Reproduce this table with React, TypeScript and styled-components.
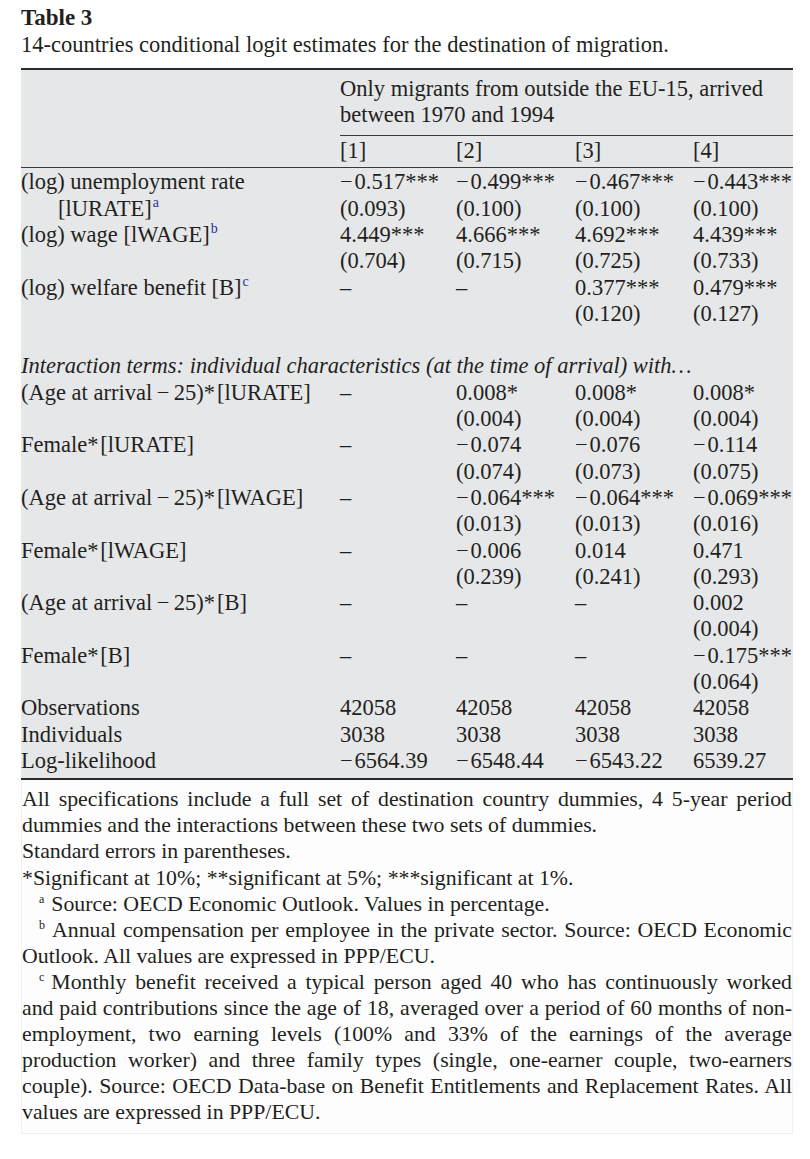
import React from "react";
import styled, { createGlobalStyle } from "styled-components";

const GlobalStyle = createGlobalStyle`
  body {
    margin: 0;
    background: #ffffff;
    color: #231f20;
    font-family: "Liberation Serif", "Times New Roman", serif;
  }
`;

const Page = styled.div`
  width: 772px;
  padding: 5px 0 0 21px;
  font-size: 22.5px;
`;

const Caption = styled.div`
  line-height: 26.5px;
  margin-bottom: 10px;
`;

const CaptionTitle = styled.div`
  font-weight: 700;
  font-size: 23px;
`;

const CaptionText = styled.div``;

const TableStyled = styled.table`
  width: 772px;
  table-layout: fixed;
  border-collapse: collapse;
  background: #e6e7e9;
  border-top: 2px solid #2b2b2b;
  border-bottom: 2px solid #2b2b2b;
  line-height: 26.3px;

  td,
  th {
    padding: 0;
    vertical-align: top;
    text-align: left;
    font-weight: 400;
    white-space: nowrap;
  }
`;

const HeadBlank = styled.th`
  border-bottom: 1.5px solid #3a3a3a;
`;

const GroupHead = styled.th`
  && {
    white-space: normal;
    padding: 6px 0 6px 0;
    border-bottom: 1.5px solid #3a3a3a;
  }
`;

const ColHead = styled.th`
  && {
    padding: 2px 0 3px;
    border-bottom: 1.5px solid #3a3a3a;
  }
`;

const SpacerRow = styled.tr<{ $h: number }>`
  height: ${(p) => p.$h}px;
`;

const LabelCell = styled.td``;

const ValueCell = styled.td``;

const SectionCell = styled.td`
  font-style: italic;
`;

const Indent = styled.span`
  padding-left: 37px;
`;

const Note = styled.sup`
  font-size: 14px;
  line-height: 0;
  color: #2d3192;
  margin-left: 1px;
`;

const Notes = styled.div`
  background: #fdfdfd;
  border: 1px solid #f0f0f0;
  border-top: none;
  padding: 6px 0 8px;
  font-size: 21.8px;
  line-height: 26.1px;
`;

const NoteParagraph = styled.p<{ $indent?: boolean }>`
  margin: 0;
  text-align: justify;
  text-indent: ${(p) => (p.$indent ? "17px" : "0")};
`;

const FootMark = styled.sup`
  font-size: 12px;
  line-height: 0;
  vertical-align: 8px;
  margin-right: 7px;
`;

type RowType = {
  label: React.ReactNode;
  values: [string, string][];
};

const mainRows: RowType[] = [
  {
    label: (
      <>
        (log) unemployment rate
        <br />
        <Indent>
          [lURATE]<Note>a</Note>
        </Indent>
      </>
    ),
    values: [
      ["−\u200A0.517***", "(0.093)"],
      ["−\u200A0.499***", "(0.100)"],
      ["−\u200A0.467***", "(0.100)"],
      ["−\u200A0.443***", "(0.100)"],
    ],
  },
  {
    label: (
      <>
        (log) wage [lWAGE]<Note>b</Note>
      </>
    ),
    values: [
      ["4.449***", "(0.704)"],
      ["4.666***", "(0.715)"],
      ["4.692***", "(0.725)"],
      ["4.439***", "(0.733)"],
    ],
  },
  {
    label: (
      <>
        (log) welfare benefit [B]<Note>c</Note>
      </>
    ),
    values: [
      ["–", ""],
      ["–", ""],
      ["0.377***", "(0.120)"],
      ["0.479***", "(0.127)"],
    ],
  },
];

const interactionRows: RowType[] = [
  {
    label: "(Age at arrival\u2009−\u200925)*\u200A[lURATE]",
    values: [
      ["–", ""],
      ["0.008*", "(0.004)"],
      ["0.008*", "(0.004)"],
      ["0.008*", "(0.004)"],
    ],
  },
  {
    label: "Female*\u200A[lURATE]",
    values: [
      ["–", ""],
      ["−\u200A0.074", "(0.074)"],
      ["−\u200A0.076", "(0.073)"],
      ["−\u200A0.114", "(0.075)"],
    ],
  },
  {
    label: "(Age at arrival\u2009−\u200925)*\u200A[lWAGE]",
    values: [
      ["–", ""],
      ["−\u200A0.064***", "(0.013)"],
      ["−\u200A0.064***", "(0.013)"],
      ["−\u200A0.069***", "(0.016)"],
    ],
  },
  {
    label: "Female*\u200A[lWAGE]",
    values: [
      ["–", ""],
      ["−\u200A0.006", "(0.239)"],
      ["0.014", "(0.241)"],
      ["0.471", "(0.293)"],
    ],
  },
  {
    label: "(Age at arrival\u2009−\u200925)*\u200A[B]",
    values: [
      ["–", ""],
      ["–", ""],
      ["–", ""],
      ["0.002", "(0.004)"],
    ],
  },
  {
    label: "Female*\u200A[B]",
    values: [
      ["–", ""],
      ["–", ""],
      ["–", ""],
      ["−\u200A0.175***", "(0.064)"],
    ],
  },
];

const summaryRows: [string, string[]][] = [
  ["Observations", ["42058", "42058", "42058", "42058"]],
  ["Individuals", ["3038", "3038", "3038", "3038"]],
  ["Log-likelihood", ["−\u200A6564.39", "−\u200A6548.44", "−\u200A6543.22", "6539.27"]],
];

function EstimateRow(props: RowType) {
  return (
    <tr>
      <LabelCell>{props.label}</LabelCell>
      {props.values.map(([coef, se], i) => (
        <ValueCell key={i}>
          {coef}
          {se && (
            <>
              <br />
              {se}
            </>
          )}
        </ValueCell>
      ))}
    </tr>
  );
}

export default function App() {
  return (
    <Page>
      <GlobalStyle />
      <Caption>
        <CaptionTitle>Table 3</CaptionTitle>
        <CaptionText>
          14-countries conditional logit estimates for the destination of migration.
        </CaptionText>
      </Caption>

      <TableStyled>
        <colgroup>
          <col style={{ width: 319 }} />
          <col style={{ width: 116 }} />
          <col style={{ width: 119 }} />
          <col style={{ width: 118 }} />
          <col style={{ width: 100 }} />
        </colgroup>
        <thead>
          <tr>
            <HeadBlank rowSpan={2} />
            <GroupHead colSpan={4}>
              Only migrants from outside the EU-15, arrived between 1970 and 1994
            </GroupHead>
          </tr>
          <tr>
            <ColHead>[1]</ColHead>
            <ColHead>[2]</ColHead>
            <ColHead>[3]</ColHead>
            <ColHead>[4]</ColHead>
          </tr>
        </thead>
        <tbody>
          <SpacerRow $h={2} />
          {mainRows.map((r, i) => (
            <EstimateRow key={i} {...r} />
          ))}
          <SpacerRow $h={26.3} />
          <tr>
            <SectionCell colSpan={5}>
              Interaction terms: individual characteristics (at the time of arrival) with…
            </SectionCell>
          </tr>
          {interactionRows.map((r, i) => (
            <EstimateRow key={i} {...r} />
          ))}
          {summaryRows.map(([label, vals]) => (
            <tr key={label}>
              <LabelCell>{label}</LabelCell>
              {vals.map((v, i) => (
                <ValueCell key={i}>{v}</ValueCell>
              ))}
            </tr>
          ))}
          <SpacerRow $h={5} />
        </tbody>
      </TableStyled>

      <Notes>
        <NoteParagraph>
          All specifications include a full set of destination country dummies, 4 5-year period
          dummies and the interactions between these two sets of dummies.
        </NoteParagraph>
        <NoteParagraph>Standard errors in parentheses.</NoteParagraph>
        <NoteParagraph>*Significant at 10%; **significant at 5%; ***significant at 1%.</NoteParagraph>
        <NoteParagraph $indent>
          <FootMark>a</FootMark>Source: OECD Economic Outlook. Values in percentage.
        </NoteParagraph>
        <NoteParagraph $indent>
          <FootMark>b</FootMark>Annual compensation per employee in the private sector. Source:
          OECD Economic Outlook. All values are expressed in PPP/ECU.
        </NoteParagraph>
        <NoteParagraph $indent>
          <FootMark>c</FootMark>Monthly benefit received a typical person aged 40 who has
          continuously worked and paid contributions since the age of 18, averaged over a period
          of 60 months of non-employment, two earning levels (100% and 33% of the earnings of the
          average production worker) and three family types (single, one-earner couple,
          two-earners couple). Source: OECD Data-base on Benefit Entitlements and Replacement
          Rates. All values are expressed in PPP/ECU.
        </NoteParagraph>
      </Notes>
    </Page>
  );
}
